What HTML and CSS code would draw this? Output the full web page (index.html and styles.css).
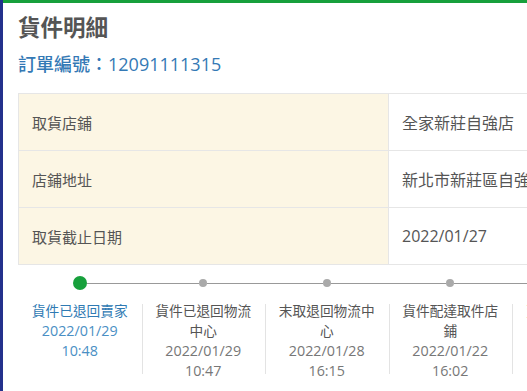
FILE: index.html
```html
<!DOCTYPE html>
<html lang="zh-Hant">
<head>
    <meta charset="UTF-8">
    <meta name="viewport" content="width=device-width, initial-scale=1.0">
    <title>貨件明細</title>
    <link rel="stylesheet" href="styles.css">
</head>
<body>

<div class="frame">
    <div class="topbar"></div>

    <div class="content">
        <h1>貨件明細</h1>
        <h2 class="order">訂單編號：12091111315</h2>

        <table class="info">
            <tr>
                <th>取貨店鋪</th>
                <td>全家新莊自強店</td>
            </tr>
            <tr>
                <th>店鋪地址</th>
                <td>新北市新莊區自強街100號</td>
            </tr>
            <tr>
                <th>取貨截止日期</th>
                <td>2022/01/27</td>
            </tr>
        </table>

        <div class="steps">
            <div class="step current">
                <div class="step-head"><span class="dot"></span></div>
                <div class="step-body">
                    <div class="label">貨件已退回賣家</div>
                    <div class="time">2022/01/29</div>
                    <div class="time">10:48</div>
                </div>
            </div>
            <div class="step">
                <div class="step-head"><span class="dot"></span></div>
                <div class="step-body">
                    <div class="label">貨件已退回物流中心</div>
                    <div class="time">2022/01/29</div>
                    <div class="time">10:47</div>
                </div>
            </div>
            <div class="step">
                <div class="step-head"><span class="dot"></span></div>
                <div class="step-body">
                    <div class="label">末取退回物流中心</div>
                    <div class="time">2022/01/28</div>
                    <div class="time">16:15</div>
                </div>
            </div>
            <div class="step">
                <div class="step-head"><span class="dot"></span></div>
                <div class="step-body">
                    <div class="label">貨件配達取件店鋪</div>
                    <div class="time">2022/01/22</div>
                    <div class="time">16:02</div>
                </div>
            </div>
            <div class="step warn">
                <div class="step-head"><span class="dot"></span></div>
                <div class="step-body">
                    <div class="label">賣家已寄件至物流中心</div>
                    <div class="time">2022/01/20</div>
                    <div class="time">09:30</div>
                </div>
            </div>
        </div>
    </div>
</div>

</body>
</html>
```

FILE: styles.css
```css
html, body {
    margin: 0;
    padding: 0;
    background: #fff;
}

body {
    font-family: 'Open Sans', 'Noto Sans CJK TC', sans-serif;
    color: #555;
}

.frame {
    border-left: 3px solid #23318c;
    height: 100vh;
    overflow: hidden;
    box-sizing: border-box;
}

.topbar {
    height: 3px;
    background: #17a03c;
}

.content {
    padding: 10px 0 0 15px;
}

h1 {
    margin: 0;
    font-size: 22.5px;
    line-height: 30px;
    font-weight: bold;
    color: #555;
}

.order {
    margin: 9px 0 0;
    font-size: 18px;
    line-height: 24px;
    font-weight: 500;
    color: #3479b5;
}

/* info table */
.info {
    margin-top: 17px;
    width: 640px;
    border-collapse: collapse;
    font-size: 15px;
}

.info th,
.info td {
    height: 56px;
    padding: 0 13px;
    border: 1px solid #e6e6e6;
    text-align: left;
    font-weight: normal;
    white-space: nowrap;
}

.info th {
    width: 343px;
    background: #fcf6e4;
}

.info td {
    font-size: 16px;
}

/* timeline */
.steps {
    display: flex;
    margin-top: 11px;
}

.step {
    flex: 0 0 123.5px;
    text-align: center;
}

.step-head {
    display: flex;
    align-items: center;
    height: 14px;
}

.step-head::before,
.step-head::after {
    content: "";
    flex: 1;
    height: 1px;
    background: #999;
}

.step:first-child .step-head::before {
    background: transparent;
}

.dot {
    width: 8px;
    height: 8px;
    border-radius: 50%;
    background: #aaa;
}

.current .dot {
    width: 14px;
    height: 14px;
    background: #17a03c;
}

.step-body {
    margin-top: 11px;
    padding: 0 10px;
    font-size: 13.7px;
    line-height: 20px;
    color: #555;
    background: linear-gradient(#e3e3e3, #e3e3e3) no-repeat 0 3px / 1px 70px;
}

.step:first-child .step-body {
    background: none;
}

.time {
    font-size: 14.3px;
    color: #777;
}

.current .label {
    color: #2f7ab3;
}

.current .time {
    color: #4a8fc4;
}

.warn .label,
.warn .time {
    color: #f6d6a8;
}
```
